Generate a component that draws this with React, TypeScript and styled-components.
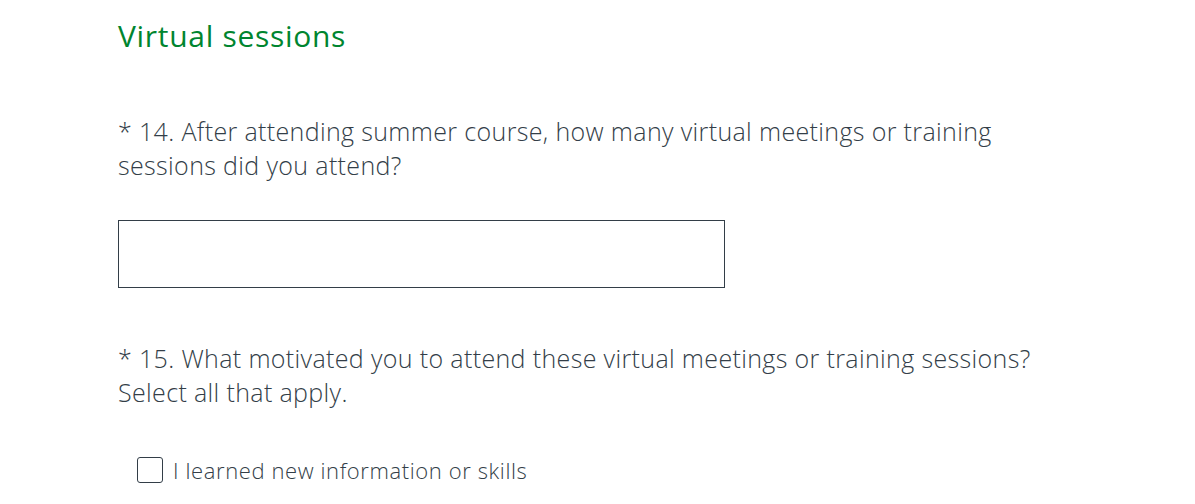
import React from "react";
import styled, { createGlobalStyle } from "styled-components";

const Global = createGlobalStyle`
  html, body { margin: 0; padding: 0; background: #ffffff; }
  body { font-family: "Open Sans", "Liberation Sans", sans-serif; }
`;

const Page = styled.div`
  width: 1195px;
  height: 504px;
  overflow: hidden;
  padding: 16px 0 0 118px;
  box-sizing: border-box;
  display: flex;
  flex-direction: column;
`;

const SectionTitle = styled.h2`
  margin: 0;
  font-weight: 400;
  font-size: 30px;
  line-height: 40px;
  color: #00852f;
  letter-spacing: 0.7px;
`;

const Question = styled.div<{ $top: number }>`
  margin-top: ${(p) => p.$top}px;
  display: flex;
  flex-direction: column;
`;

const QuestionTitle = styled.div`
  font-weight: 300;
  font-size: 25px;
  line-height: 34px;
  letter-spacing: 0.36px;
  color: #333e48;
  max-width: 935px;
`;

const TextInput = styled.input`
  margin-top: 38px;
  width: 607px;
  height: 68px;
  box-sizing: border-box;
  border: 1px solid #333e48;
  border-radius: 0;
  outline: none;
  background: #fff;
  font: inherit;
`;

const Options = styled.div`
  margin-top: 47px;
  padding-left: 19px;
  display: flex;
  flex-direction: column;
`;

const OptionRow = styled.label`
  display: flex;
  align-items: center;
  gap: 10px;
`;

const Box = styled.span`
  width: 26px;
  height: 26px;
  box-sizing: border-box;
  border: 1.5px solid #333e48;
  border-radius: 3px;
  background: #fff;
`;

const OptionText = styled.span`
  font-weight: 300;
  font-size: 22px;
  line-height: 28px;
  letter-spacing: 0.6px;
  color: #333e48;
`;

export default function App() {
  return (
    <>
      <Global />
      <Page>
        <SectionTitle>Virtual sessions</SectionTitle>
        <Question $top={58}>
          <QuestionTitle>
            * 14. After attending summer course, how many virtual meetings or training sessions did you attend?
          </QuestionTitle>
          <TextInput type="text" aria-label="Number of sessions" />
        </Question>
        <Question $top={53}>
          <QuestionTitle>
            * 15. What motivated you to attend these virtual meetings or training sessions? Select all that apply.
          </QuestionTitle>
          <Options>
            <OptionRow>
              <Box />
              <OptionText>I learned new information or skills</OptionText>
            </OptionRow>
          </Options>
        </Question>
      </Page>
    </>
  );
}
